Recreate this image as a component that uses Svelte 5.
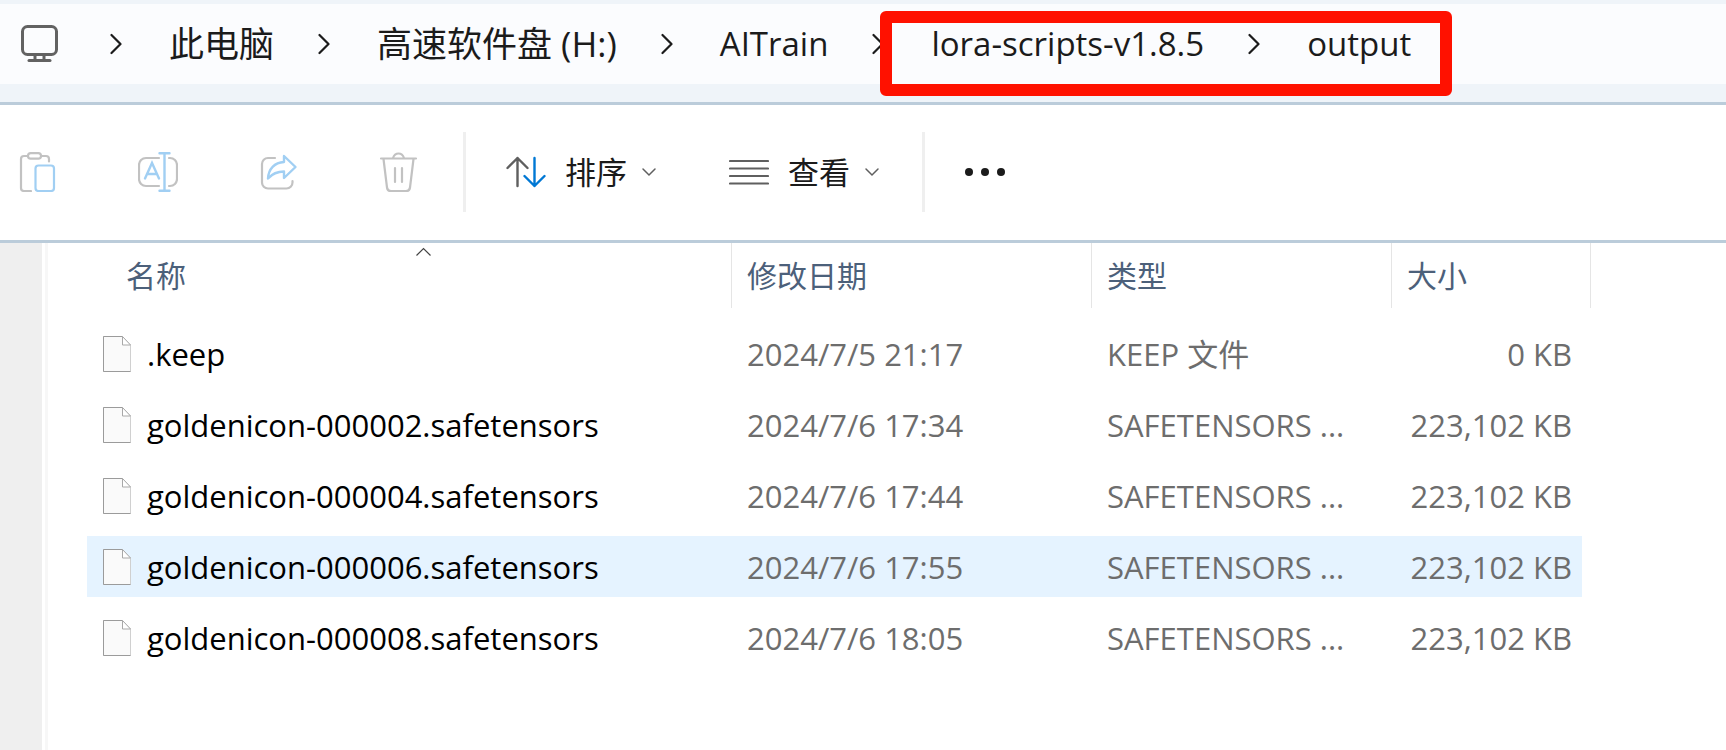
<script lang="ts">
	interface Crumb {
		label: string;
		latin?: boolean;
	}

	interface FileRow {
		name: string;
		modified: string;
		type: string;
		size: string;
	}

	const crumbs: Crumb[] = [
		{ label: '此电脑' },
		{ label: '高速软件盘 (H:)' },
		{ label: 'AITrain', latin: true },
		{ label: 'lora-scripts-v1.8.5', latin: true },
		{ label: 'output', latin: true }
	];

	const columns = [
		{ key: 'name', label: '名称' },
		{ key: 'modified', label: '修改日期' },
		{ key: 'type', label: '类型' },
		{ key: 'size', label: '大小' }
	];

	const files: FileRow[] = [
		{ name: '.keep', modified: '2024/7/5 21:17', type: 'KEEP 文件', size: '0 KB' },
		{ name: 'goldenicon-000002.safetensors', modified: '2024/7/6 17:34', type: 'SAFETENSORS ...', size: '223,102 KB' },
		{ name: 'goldenicon-000004.safetensors', modified: '2024/7/6 17:44', type: 'SAFETENSORS ...', size: '223,102 KB' },
		{ name: 'goldenicon-000006.safetensors', modified: '2024/7/6 17:55', type: 'SAFETENSORS ...', size: '223,102 KB' },
		{ name: 'goldenicon-000008.safetensors', modified: '2024/7/6 18:05', type: 'SAFETENSORS ...', size: '223,102 KB' }
	];

	let selected = $state('goldenicon-000006.safetensors');
</script>

{#snippet caret()}
	<svg width="16" height="10" viewBox="0 0 16 10">
		<path d="M2 2l6 6 6-6" fill="none" stroke="#5f5f5f" stroke-width="1.5" stroke-linecap="round" />
	</svg>
{/snippet}

<div class="explorer">
	<header class="address">
		<nav class="path" aria-label="Path">
			<svg width="38" height="38" viewBox="0 0 38 38" fill="none" stroke="#626262" stroke-width="3">
				<rect x="2.5" y="1.5" width="34" height="28" rx="5" />
				<path d="M15 30v5M24 30v5" />
				<path d="M9 35.5h21" stroke-linecap="round" />
			</svg>
			<ol>
				{#each crumbs as crumb (crumb.label)}
					<li>
						<svg width="12" height="22" viewBox="0 0 12 22">
							<path d="M1.5 2l9 9-9 9" fill="none" stroke="#1b1b1b" stroke-width="2.2" stroke-linecap="round" stroke-linejoin="round" />
						</svg>
						<a href="#{crumb.label}" class:latin={crumb.latin}>{crumb.label}</a>
					</li>
				{/each}
			</ol>
		</nav>
		<div class="marker"></div>
	</header>

	<div class="toolbar" role="toolbar">
		<div class="group edit">
			<button type="button" aria-label="粘贴">
				<svg width="40" height="40" viewBox="0 0 40 40" fill="none" stroke="#c2c2c2" stroke-width="2.2" stroke-linecap="round">
					<path d="M10 4H6a3 3 0 0 0-3 3v29a3 3 0 0 0 3 3h7M23 4h5a3 3 0 0 1 3 3v2.5" />
					<rect x="10" y="1.1" width="13" height="5.5" rx="2.7" />
					<rect x="17.5" y="13.5" width="18.5" height="25.5" rx="3" stroke="#a1cff3" />
				</svg>
			</button>
			<button type="button" aria-label="重命名">
				<svg width="40" height="40" viewBox="0 0 40 40" fill="none" stroke="#c2c2c2" stroke-width="2.2" stroke-linecap="round">
					<path d="M21 6H8a7 7 0 0 0-7 7v14a7 7 0 0 0 7 7h13M31 6h1a7 7 0 0 1 7 7v14a7 7 0 0 1-7 7h-1" />
					<path d="M7 26.5l7-15.5 7 15.5M9.5 22h9M21.5 1.2h10M21.5 38.8h10M26.5 1.5v37" stroke="#a1cff3" stroke-width="2.4" />
				</svg>
			</button>
			<button type="button" aria-label="共享">
				<svg width="40" height="40" viewBox="0 0 40 40" fill="none" stroke="#c2c2c2" stroke-width="2.2" stroke-linecap="round" stroke-linejoin="round">
					<path d="M17 6H10a6 6 0 0 0-6 6v18.500a6 6 0 0 0 6 6h18.500a6 6 0 0 0 6-6V29" />
					<path d="M26 4l11.500 11L26 26v-6.500C18.500 19.500 14 22 10 26.500 10.500 17 16.500 10.500 26 10z" stroke="#a1cff3" stroke-width="2.4" />
				</svg>
			</button>
			<button type="button" aria-label="删除">
				<svg width="40" height="40" viewBox="0 0 40 40" fill="none" stroke="#c2c2c2" stroke-width="2.2" stroke-linecap="round" stroke-linejoin="round">
					<path d="M3 6.5h35M15 6c1-3 3-4.500 5.500-4.500S25 3 26 6M5.500 7L9 35.500a4 4 0 0 0 4 3.500h15a4 4 0 0 0 4-3.500L35.500 7M17 16v14M24 16v14" />
				</svg>
			</button>
		</div>
		<div class="group menus">
			<button type="button">
				<svg width="40" height="32" viewBox="0 0 40 32" fill="none" stroke-width="2.4" stroke-linecap="round" stroke-linejoin="round">
					<path d="M11.5 30V2M1.5 12l10-10 10 10" stroke="#5f5f5f" />
					<path d="M28.5 2v28M18.5 20l10 10 10-10" stroke="#0078d4" />
				</svg>
				<span>排序</span>
				{@render caret()}
			</button>
			<button type="button">
				<svg width="40" height="28" viewBox="0 0 40 28" stroke="#5f5f5f" stroke-width="2.2" stroke-linecap="round">
					<path d="M1 3h38M1 10.5h38M1 18h38M1 25.5h38" />
				</svg>
				<span>查看</span>
				{@render caret()}
			</button>
		</div>
		<div class="group more">
			<button type="button" aria-label="查看更多">
				<svg width="40" height="10" viewBox="0 0 40 10" fill="#1b1b1b">
					<circle cx="4" cy="5" r="4" />
					<circle cx="20" cy="5" r="4" />
					<circle cx="36" cy="5" r="4" />
				</svg>
			</button>
		</div>
	</div>

	<div class="content">
		<aside></aside>
		<main>
			<table>
				<colgroup>
					<col class="col-name" />
					<col class="col-modified" />
					<col class="col-type" />
					<col class="col-size" />
				</colgroup>
				<thead>
					<tr>
						{#each columns as column (column.key)}
							<th class={column.key}>
								<button type="button">
									{column.label}
									{#if column.key === 'name'}
										<svg class="sorted" width="17" height="10" viewBox="0 0 17 10">
											<path d="M1.5 8.5l7-7 7 7" fill="none" stroke="#444" stroke-width="1.2" />
										</svg>
									{/if}
								</button>
							</th>
						{/each}
					</tr>
				</thead>
				<tbody>
					{#each files as file (file.name)}
						<tr class:selected={file.name === selected} onclick={() => (selected = file.name)}>
							<td class="name">
								<div class="file">
									<svg width="30" height="38" viewBox="0 0 30 38">
										<path d="M1.5 1.5h19l8 8.5v26.5h-27z" fill="#fafafa" stroke="#d0d0d0" />
										<path d="M20.5 1.5h-19v35h27" fill="none" stroke="#9b9b9b" />
										<path d="M20.5 1.5v8.5h8z" fill="#fff" stroke="#a8a8a8" />
									</svg>
									<span>{file.name}</span>
								</div>
							</td>
							<td>{file.modified}</td>
							<td>{file.type}</td>
							<td class="size">{file.size}</td>
						</tr>
					{/each}
				</tbody>
			</table>
		</main>
	</div>
</div>

<style>
	:global(body) {
		margin: 0;
		background: #fff;
	}

	.explorer {
		display: flex;
		flex-direction: column;
		min-height: 100vh;
		overflow: hidden;
		font-family: 'Open Sans', 'Noto Sans CJK SC', sans-serif;
		font-size: 31px;
		line-height: 40px;
		color: #1b1b1b;
	}

	button {
		padding: 0;
		border: 0;
		background: none;
		font: inherit;
		color: inherit;
		cursor: pointer;
	}

	svg {
		display: block;
		flex: none;
	}

	.address {
		position: relative;
		padding: 4px 0 18px;
		background: #eff4f9;
		border-bottom: 3px solid #bbccda;
	}

	.path {
		display: flex;
		align-items: center;
		height: 80px;
		padding-left: 20px;
		background: #fbfcfe;
		font-size: 35px;
	}

	.path ol,
	.path li {
		display: flex;
		align-items: center;
		margin: 0;
		padding: 0;
		list-style: none;
		white-space: nowrap;
	}

	.path li {
		gap: 47px;
		padding-left: 44px;
	}

	.path li:first-child {
		padding-left: 52px;
	}

	.path a {
		color: inherit;
		text-decoration: none;
	}

	.path .latin {
		font-size: 33px;
	}

	/* red frame drawn over the last two folders */
	.marker {
		position: absolute;
		top: 11px;
		left: 880px;
		box-sizing: border-box;
		width: 572px;
		height: 85px;
		border: 12px solid #ff1100;
		border-radius: 6px;
		pointer-events: none;
	}

	.toolbar {
		display: flex;
		align-items: center;
		height: 134px;
		padding-bottom: 1px;
		border-bottom: 3px solid #bbccda;
	}

	.group {
		display: flex;
		align-items: center;
		height: 80px;
	}

	.group button {
		display: flex;
		align-items: center;
	}

	.edit {
		gap: 80px;
		padding: 0 45px 0 18px;
		border-right: 3px solid #efefef;
	}

	.menus {
		gap: 72px;
		padding: 0 42px 0 40px;
		border-right: 3px solid #efefef;
	}

	.menus span {
		margin: 0 14px 0 19px;
	}

	.more {
		padding-left: 40px;
	}

	.content {
		display: flex;
		flex: 1;
	}

	aside {
		flex: none;
		width: 42px;
		margin-right: 3px;
		background: #efefef;
	}

	main {
		flex: 1;
		padding-left: 39px;
		border-left: 3px solid #f7f7f7;
	}

	table {
		width: 1504px;
		table-layout: fixed;
		border-collapse: separate;
		border-spacing: 0;
		color: #6d6d6d;
	}

	.col-name {
		width: 644px;
	}

	.col-modified {
		width: 360px;
	}

	.col-type {
		width: 300px;
	}

	.col-size {
		width: 200px;
	}

	th {
		padding: 0 0 10px;
		font-size: 30px;
		font-weight: 400;
	}

	th button {
		position: relative;
		display: block;
		width: 100%;
		height: 65px;
		padding: 1px 0 0 15px;
		border-left: 1px solid #e5e5e5;
		text-align: left;
		color: #4c607a;
	}

	th.name button {
		padding-left: 39px;
		border-left: 0;
	}

	th.size button {
		border-right: 1px solid #e5e5e5;
	}

	.sorted {
		position: absolute;
		top: 4px;
		left: 51%;
	}

	td {
		height: 61px;
		padding: 0 0 0 16px;
		border: solid transparent;
		border-width: 5px 0;
		background-clip: padding-box;
		white-space: nowrap;
	}

	td.name {
		padding-left: 15px;
		border-radius: 3px 0 0 3px;
		color: #000;
	}

	td.size {
		padding-right: 10px;
		border-right-width: 9px;
		text-align: right;
	}

	.file {
		display: flex;
		align-items: center;
		gap: 15px;
	}

	.selected td {
		background-color: #e5f3ff;
	}
</style>
